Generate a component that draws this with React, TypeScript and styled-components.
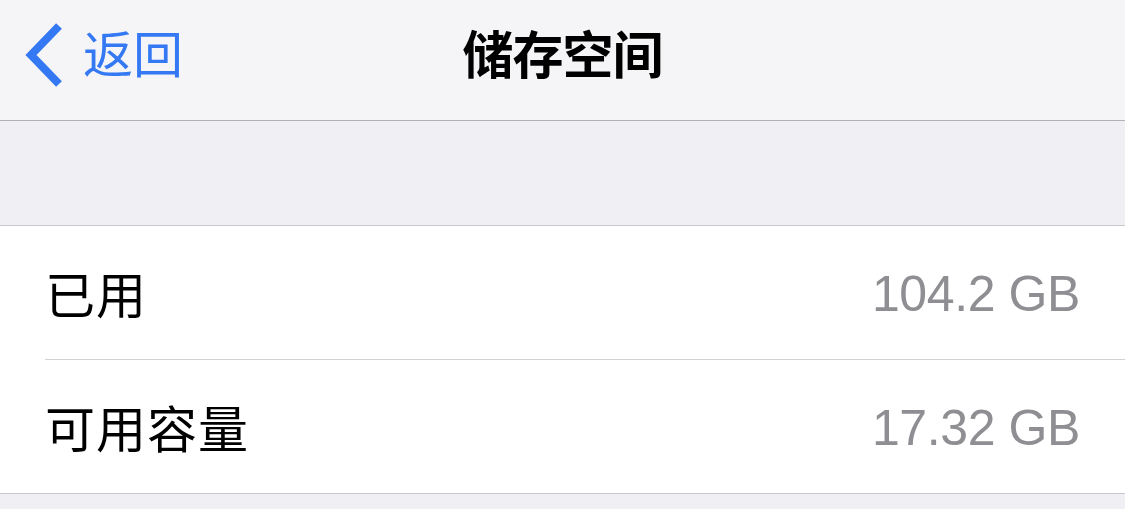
import React from 'react';
import styled, { createGlobalStyle } from 'styled-components';

// iOS-style "storage" settings screen: a translucent nav bar with a back
// button, an empty grouped-section header, then a plain two-row table.

const GlobalStyle = createGlobalStyle`
  html, body {
    margin: 0;
    padding: 0;
    background: #efeff4;
  }
  body {
    font-family: "Noto Sans CJK SC", "Noto Sans", sans-serif;
    -webkit-font-smoothing: antialiased;
  }
`;

const Screen = styled.div`
  width: 1125px;
  height: 509px;
  display: flex;
  flex-direction: column;
  background: #efeff4;
  overflow: hidden;
`;

const NavBar = styled.header`
  position: relative;
  height: 120px;
  flex-shrink: 0;
  display: flex;
  align-items: center;
  background: #f5f5f7;
  border-bottom: 1px solid #b2b2b4;
`;

const BackButton = styled.button`
  display: flex;
  align-items: center;
  gap: 19px;
  height: 100%;
  padding: 0 0 10px 24px;
  border: none;
  background: transparent;
  color: #3479f3;
  font-family: inherit;
  font-size: 50px;
  line-height: 1;
  cursor: pointer;
`;

const BackLabel = styled.span`
  margin-top: -8px;
`;

const Title = styled.h1`
  position: absolute;
  left: 0;
  right: 0;
  top: 0;
  bottom: 0;
  margin: 0;
  display: flex;
  align-items: center;
  justify-content: center;
  padding-bottom: 16px;
  pointer-events: none;
  font-size: 51px;
  font-weight: 600;
  color: #000;
  letter-spacing: -1px;
`;

const SectionGap = styled.div`
  height: 104px;
  flex-shrink: 0;
  border-bottom: 1px solid #c8c7cc;
`;

const Table = styled.ul`
  list-style: none;
  margin: 0;
  padding: 0 0 0 45px;
  background: #fff;
  border-bottom: 1px solid #c8c7cc;
`;

const Row = styled.li<{ $last?: boolean }>`
  height: 133px;
  display: flex;
  align-items: center;
  justify-content: space-between;
  padding-right: 45px;
  border-bottom: ${(p) => (p.$last ? 'none' : '1px solid #d1d1d6')};
`;

const Label = styled.span`
  font-size: 50px;
  color: #000;
  letter-spacing: 1px;
  margin-top: -2px;
`;

const Value = styled.span`
  font-family: "Liberation Sans", "Noto Sans", sans-serif;
  font-size: 50px;
  color: #8e8e93;
  letter-spacing: -0.4px;
  margin-top: 2px;
`;

const Chevron = () => (
  <svg width="40" height="66" viewBox="0 0 40 66" fill="none">
    <path d="M35 4 L7 33 L35 62" stroke="currentColor" strokeWidth="8" strokeLinecap="butt" strokeLinejoin="miter" />
  </svg>
);

const rows = [
  { label: '已用', value: '104.2 GB' },
  { label: '可用容量', value: '17.32 GB' },
];

export default function App() {
  return (
    <>
      <GlobalStyle />
      <Screen>
        <NavBar>
          <BackButton>
            <Chevron />
            <BackLabel>返回</BackLabel>
          </BackButton>
          <Title>储存空间</Title>
        </NavBar>
        <SectionGap />
        <Table>
          {rows.map((r, i) => (
            <Row key={r.label} $last={i === rows.length - 1}>
              <Label>{r.label}</Label>
              <Value>{r.value}</Value>
            </Row>
          ))}
        </Table>
      </Screen>
    </>
  );
}
